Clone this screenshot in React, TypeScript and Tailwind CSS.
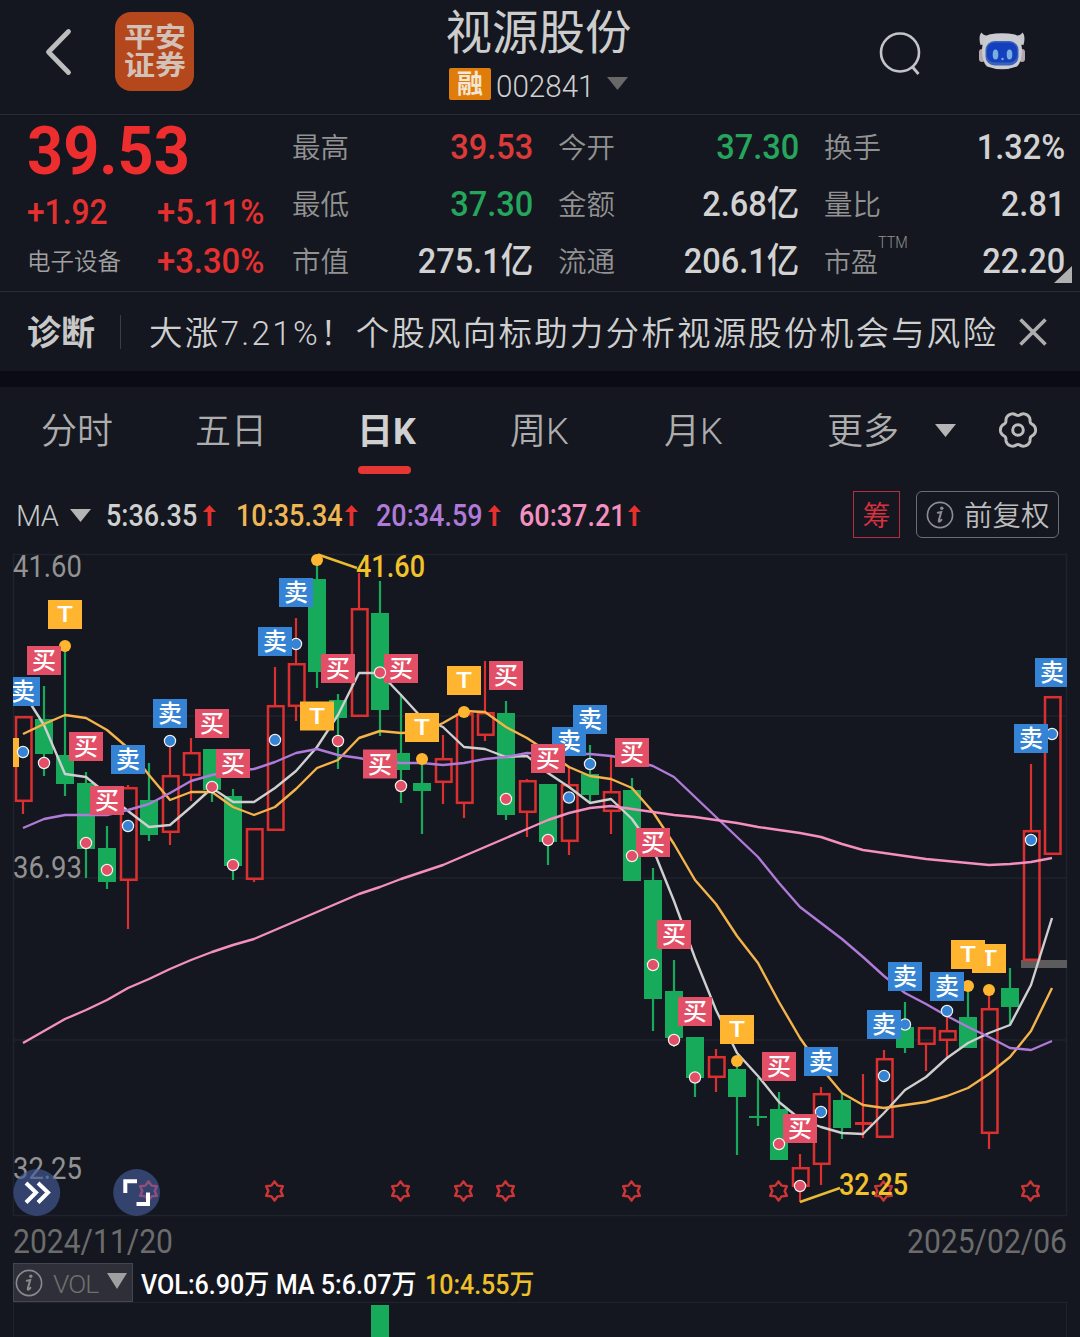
import type { ReactNode } from 'react';
import clsx from 'clsx';

type Kind = 'buy' | 'sell' | 'both';

// up/down, high, body top, body bottom, low
type Candle = ['u' | 'd', number, number, number, number];

const candles: Candle[] = [
  ['u', 716, 716, 802, 814],
  ['d', 686, 719, 754, 776],
  ['d', 642, 755, 784, 796],
  ['d', 772, 783, 849, 878],
  ['d', 826, 848, 882, 889],
  ['u', 785, 787, 881, 929],
  ['d', 763, 800, 835, 841],
  ['u', 741, 775, 833, 845],
  ['u', 738, 752, 776, 801],
  ['d', 749, 749, 790, 802],
  ['d', 789, 796, 866, 880],
  ['u', 828, 828, 880, 882],
  ['u', 667, 705, 831, 831],
  ['u', 618, 663, 707, 721],
  ['d', 560, 579, 672, 688],
  ['d', 694, 700, 718, 769],
  ['u', 573, 608, 717, 717],
  ['d', 581, 613, 710, 736],
  ['d', 695, 753, 770, 803],
  ['d', 759, 783, 791, 834],
  ['u', 735, 758, 783, 804],
  ['u', 712, 713, 804, 818],
  ['u', 661, 712, 736, 741],
  ['d', 701, 713, 815, 820],
  ['u', 779, 780, 813, 837],
  ['d', 784, 784, 842, 865],
  ['u', 767, 784, 842, 855],
  ['d', 745, 774, 795, 802],
  ['u', 755, 791, 812, 834],
  ['d', 778, 790, 881, 881],
  ['d', 868, 880, 999, 1031],
  ['d', 960, 991, 1038, 1047],
  ['d', 1037, 1037, 1078, 1097],
  ['u', 1049, 1056, 1078, 1092],
  ['d', 1061, 1069, 1097, 1155],
  ['d', 1078, 1116, 1118, 1126],
  ['d', 1092, 1109, 1160, 1160],
  ['u', 1154, 1167, 1187, 1202],
  ['u', 1087, 1093, 1165, 1185],
  ['d', 1093, 1100, 1128, 1139],
  ['u', 1074, 1122, 1125, 1138],
  ['u', 1050, 1058, 1138, 1138],
  ['d', 1002, 1027, 1048, 1053],
  ['u', 1027, 1027, 1045, 1071],
  ['u', 1011, 1030, 1041, 1058],
  ['d', 986, 1017, 1048, 1048],
  ['u', 990, 1008, 1134, 1149],
  ['d', 968, 988, 1007, 1025],
  ['u', 764, 830, 961, 961],
  ['u', 696, 696, 855, 855],
];

// candle index, kind, badge top, dot centre
const marks: [number, Kind, number, number][] = [
  [0, 'sell', 677, 752],
  [1, 'buy', 646, 763],
  [2, 'both', 600, 646],
  [3, 'buy', 732, 843],
  [4, 'buy', 786, 870],
  [5, 'sell', 745, 826],
  [7, 'sell', 699, 741],
  [9, 'buy', 709, 787],
  [10, 'buy', 749, 865],
  [12, 'sell', 627, 740],
  [13, 'sell', 578, 644],
  [14, 'both', 701.5, 560],
  [15, 'buy', 654, 741],
  [17, 'buy', 749.5, 672.5],
  [18, 'buy', 654, 786],
  [19, 'both', 713, 759],
  [21, 'both', 666, 712],
  [23, 'buy', 661, 799],
  [25, 'buy', 744, 840],
  [26, 'sell', 727, 797.5],
  [27, 'sell', 705, 764],
  [29, 'buy', 738, 856],
  [30, 'buy', 828, 965],
  [31, 'buy', 920, 1040],
  [32, 'buy', 997, 1077.5],
  [34, 'both', 1015, 1061],
  [36, 'buy', 1052, 1144],
  [37, 'buy', 1114, 1186],
  [38, 'sell', 1047, 1112],
  [41, 'sell', 1010, 1076],
  [42, 'sell', 962, 1024.5],
  [44, 'sell', 972, 1011],
  [45, 'both', 940, 986],
  [46, 'both', 944, 990],
  [48, 'sell', 724, 840],
  [49, 'sell', 658, 734],
];

const ma5 = [
  692, 725, 774, 777, 794, 811, 827, 825, 807, 788, 802, 802, 788, 771, 747, 715, 673, 673, 695, 718, 727, 747, 749,
  757, 756, 773, 787, 803, 799, 819, 849, 901, 958, 1010, 1053, 1076, 1102, 1119, 1127, 1133, 1134, 1113, 1090, 1077,
  1058, 1043, 1033, 1025, 985, 918,
];
const ma10 = [
  734, 724, 715, 718, 730, 748, 775, 800, 792, 792, 807, 815, 807, 789, 768, 760, 738, 731, 733, 732, 723, 711, 712,
  727, 738, 752, 767, 776, 779, 788, 812, 844, 880, 904, 936, 963, 1002, 1038, 1068, 1093, 1105, 1108, 1105, 1102,
  1096, 1088, 1074, 1057, 1031, 988,
];
const ma20 = [
  828, 819, 815, 815, 815, 810, 804, 793, 781, 775, 771, 769, 762, 753, 749, 755, 758, 762, 763, 763, 765, 763, 759,
  757, 753, 754, 754, 754, 756, 760, 766, 777, 797, 817, 837, 857, 883, 907, 923, 939, 957, 976, 993, 1004, 1016,
  1027, 1037, 1048, 1050, 1041,
];
const ma60 = [
  1043, 1031, 1019, 1010, 1000, 988, 979, 969, 960, 952, 945, 939, 930, 921, 912, 903, 894, 887, 879, 872, 865, 856,
  847, 838, 829, 820, 813, 808, 806, 809, 812, 815, 817, 820, 823, 827, 830, 833, 837, 844, 850, 853, 856, 859, 861,
  863, 865, 864, 862, 858,
];

const cx = (i: number) => 23 + i * 21;
const toPoints = (ys: number[]) => ys.map((y, i) => `${cx(i)},${y}`).join(' ');

const starIndexes = [12, 18, 21, 23, 29, 36, 41, 48];

const kindColor = { buy: '#e34f66', sell: '#3583d4', both: '#ffb52f' };
const kindText = { buy: '买', sell: '卖', both: 'T' };

const starPath = () => {
  const pts: string[] = [];
  for (let k = 0; k < 12; k++) {
    const r = k % 2 === 0 ? 9.6 : 6.2;
    const a = (Math.PI / 6) * k - Math.PI / 2;
    pts.push(`${(r * Math.cos(a)).toFixed(2)},${(r * Math.sin(a)).toFixed(2)}`);
  }
  return pts.join(' ');
};

const gearPath = () => {
  const pts: string[] = [];
  for (let k = 0; k < 120; k++) {
    const a = (Math.PI * 2 * k) / 120;
    const r = 16.3 + 1.5 * Math.cos(6 * a) - 0.3 * Math.cos(12 * a);
    pts.push(`${(20 + r * Math.cos(a)).toFixed(2)},${(20 + r * Math.sin(a)).toFixed(2)}`);
  }
  return pts.join(' ');
};

const Triangle = ({ className }: { className?: string }) => (
  <svg viewBox="0 0 21 13" preserveAspectRatio="none" className={clsx('shrink-0', className)}>
    <path d="M0 0H21L10.5 13Z" fill="currentColor" />
  </svg>
);

const InfoIcon = ({ className }: { className?: string }) => (
  <svg viewBox="0 0 28 28" className={clsx('h-7 w-7 shrink-0', className)}>
    <circle cx="14" cy="14" r="12.6" fill="none" stroke="currentColor" strokeWidth="1.6" />
    <circle cx="15.8" cy="7.2" r="1.7" fill="currentColor" />
    <path
      d="M11.8 11.8l3.4-.8-2.400 8.600c-.3 1.600.8 1.400 2.600-.8"
      fill="none"
      stroke="currentColor"
      strokeWidth="2"
      strokeLinecap="round"
    />
  </svg>
);

const UpArrow = () => (
  <svg viewBox="0 0 13 21" className="h-[21px] w-[13px] shrink-0">
    <path d="M6.5 0L13 7H8.4V21H4.6V7H0Z" fill="#e8302f" />
  </svg>
);

const Robot = () => (
  <svg viewBox="0 0 46 38" className="h-[38px] w-[46px]">
    <path d="M1.5 13C-.3 7 .6 2 2.6.6 4 3 6.5 4 9 3.400L8 12Z" fill="#c4c6cb" />
    <path d="M44.500 13C46.300 7 45.400 2 43.400.6 42 3 39.500 4 37 3.400L38 12Z" fill="#c4c6cb" />
    <rect x="0" y="17" width="6" height="13" rx="3" fill="#b5a6ab" />
    <rect x="40" y="17" width="6" height="13" rx="3" fill="#b5a6ab" />
    <path d="M10 2.500Q23 0 36 2.500Q42 5 43 17Q43 30 38 34.500Q23 40 8 34.500Q3 30 3 17Q4 5 10 2.500Z" fill="#c9cbd0" />
    <rect x="6.500" y="9" width="33" height="24.500" rx="9" fill="#3a62b8" />
    <rect x="7.800" y="10.500" width="30.400" height="20" rx="8" fill="#1440bd" />
    <ellipse cx="16.500" cy="22.500" rx="2.800" ry="5" fill="#79aee0" />
    <ellipse cx="30.500" cy="22.500" rx="2.800" ry="5" fill="#79aee0" />
    <circle cx="23.500" cy="27" r="1.200" fill="#79aee0" />
  </svg>
);

const Header = () => (
  <header className="flex h-[115px] border-b border-[#2a2d35]">
    <div className="flex w-[360px] pt-3">
      <svg viewBox="0 0 30 50" className="mt-[15px] ml-[43px] h-[50px] w-[30px]">
        <path d="M25.500 4.500L5.500 25L25.500 45.500" fill="none" stroke="#bdbdbd" strokeWidth="4.800" strokeLinecap="round" strokeLinejoin="round" />
      </svg>
      <div className="ml-[42px] flex h-[79px] w-[79px] flex-col items-center justify-center rounded-2xl bg-[#b5471c] pt-px text-[27px] leading-[28px] font-bold text-[#d3c0b6]">
        <span className="scale-x-[1.15]">平安</span>
        <span className="scale-x-[1.15]">证券</span>
      </div>
    </div>
    <div className="flex w-[360px] flex-col items-center">
      <h1 className="mt-[10px] mr-[3px] text-[46.500px] leading-[46px] text-[#cdcdcd]">视源股份</h1>
      <div className="mt-[13px] flex w-[182px] items-center">
        <span className="-mt-1 flex h-8 w-[42px] shrink-0 items-center justify-center rounded-xs bg-[#e07c0a] text-[26px] leading-none font-bold text-[#f3e6d4]">
          融
        </span>
        <span className="ml-[5px] w-[111px] origin-left scale-x-[.94] pt-[2px] text-[31.500px] leading-none font-[350] text-[#d0d0d0]">002841</span>
        <Triangle className="-mt-1 h-[13px] w-[21px] text-[#686868]" />
      </div>
    </div>
    <div className="flex w-[360px] pt-8">
      <svg viewBox="0 0 44 46" className="ml-[158px] h-[46px] w-[44px]">
        <circle cx="22" cy="20.500" r="19" fill="none" stroke="#c2c4c8" strokeWidth="2.600" />
        <path d="M34.500 35L40.500 42" stroke="#c2c4c8" strokeWidth="2.800" />
      </svg>
      <div className="ml-[57px]">
        <Robot />
      </div>
    </div>
  </header>
);

const Stat = ({ label, value, tone = 'text-[#d2d2d2]' }: { label: ReactNode; value: string; tone?: string }) => (
  <div className="flex h-[57px] items-center justify-between">
    <span className="pt-[5px] text-[28.500px] leading-none font-[350] text-[#929292]">{label}</span>
    <span className={clsx('-mr-px origin-right scale-x-[.93] pt-[2px] text-[35px] leading-none font-medium', tone)}>{value}</span>
  </div>
);

const Quote = () => (
  <section className="flex h-[177px] border-b border-[#2a2d35]">
    <div className="w-[292px] pl-[27px] text-[#e43030]">
      <div className="w-[170px] origin-left scale-x-[.94] pt-[3px] text-[67px] leading-[66px] font-bold text-[#ee2e2e]">39.53</div>
      <div className="flex h-[57px] items-center text-[34.500px] leading-none font-medium">
        <span className="w-[130px] origin-left scale-x-[.92]">+1.92</span>
        <span className="origin-left scale-x-[.95]">+5.11%</span>
      </div>
      <div className="-mt-[3px] flex h-[46px] items-center text-[34.500px] leading-none font-medium">
        <span className="w-[130px] pt-1 text-[23.500px] font-[350] text-[#a0a0a0]">电子设备</span>
        <span className="origin-left scale-x-[.95]">+3.30%</span>
      </div>
    </div>
    <div className="w-[240px] pt-[3px]">
      <Stat label="最高" value="39.53" tone="text-[#dc3a38]" />
      <Stat label="最低" value="37.30" tone="text-[#25a65c]" />
      <Stat label="市值" value="275.1亿" />
    </div>
    <div className="ml-[26px] w-[240px] pt-[3px]">
      <Stat label="今开" value="37.30" tone="text-[#25a65c]" />
      <Stat label="金额" value="2.68亿" />
      <Stat label="流通" value="206.1亿" />
    </div>
    <div className="relative ml-[26px] w-[240px] pt-[3px]">
      <Stat label="换手" value="1.32%" />
      <Stat label="量比" value="2.81" />
      <Stat
        label={
          <span className="flex text-[27px]">
            市盈<span className="-mt-[15px] origin-left scale-x-90 text-base leading-none">TTM</span>
          </span>
        }
        value="22.20"
      />
      <svg viewBox="0 0 18 17" className="absolute -right-2 bottom-2 h-[17px] w-[18px]">
        <path d="M18 0V17H0Z" fill="#b0b0b0" />
      </svg>
    </div>
  </section>
);

const Diagnosis = () => (
  <section className="flex h-[79px] items-center pl-[27px]">
    <span className="pt-[3px] text-[34px] leading-none font-bold text-[#c8c8c8]">诊断</span>
    <span className="ml-[25px] h-[34px] w-px bg-[#3a3d45]" />
    <span className="ml-7 w-[870px] pt-1 text-[33.500px] leading-none font-[350] tracking-[2.200px] whitespace-nowrap text-[#cfcfcf]">
      大涨7.21%！个股风向标助力分析视源股份机会与风险
    </span>
    <svg viewBox="0 0 28 28" className="h-7 w-7 shrink-0">
      <path d="M1.500 1.500L26.500 26.500M26.500 1.500L1.500 26.500" stroke="#adadad" strokeWidth="3.600" />
    </svg>
  </section>
);

const Tabs = () => (
  <nav className="flex h-[104px] pt-[27px] text-[36px] leading-[36px] font-[350] whitespace-nowrap text-[#adadad]">
    <span className="ml-[41px] w-[154px]">分时</span>
    <span className="w-[162px]">五日</span>
    <span className="w-[153px] font-bold text-[#d0d0d0]">
      日K
      <span className="mt-4 ml-px block h-2 w-[53px] rounded-full bg-[#e63634]" />
    </span>
    <span className="w-[154px]">周K</span>
    <span className="w-[163px]">月K</span>
    <span className="w-[108px]">更多</span>
    <Triangle className="mt-[10px] h-[13px] w-[21px] text-[#b5b5b5]" />
    <svg viewBox="0 0 40 40" className="-mt-1 ml-[42px] h-10 w-10">
      <polygon points={gearPath()} fill="none" stroke="#bcbcbc" strokeWidth="3" />
      <circle cx="20" cy="20" r="5.300" fill="none" stroke="#bcbcbc" strokeWidth="3" />
    </svg>
  </nav>
);

const MaValue = ({ text, width, color }: { text: string; width: string; color: string }) => (
  <span className={clsx('flex items-center', width)}>
    <span className={clsx('origin-left scale-x-[.87] text-[31px] leading-none font-medium', color)}>{text}</span>
  </span>
);

const MaRow = () => (
  <section className="flex h-[54px] items-start pl-4">
    <div className="flex h-12 items-center">
      <span className="w-[54px] pt-[3px] text-[29px] leading-none font-[350] tracking-[-0.500px] text-[#c8c8c8]">MA</span>
      <Triangle className="h-[13px] w-[21px] text-[#b5b5b5]" />
      <div className="ml-[15px] flex items-center">
        <MaValue text="5:36.35" width="w-[97px]" color="text-[#d0d0d0]" />
        <UpArrow />
      </div>
      <div className="ml-[20px] flex items-center">
        <MaValue text="10:35.34" width="w-[109px]" color="text-[#f0b654]" />
        <UpArrow />
      </div>
      <div className="ml-[18px] flex items-center">
        <MaValue text="20:34.59" width="w-[112px]" color="text-[#b07ad8]" />
        <UpArrow />
      </div>
      <div className="ml-[18px] flex items-center">
        <MaValue text="60:37.21" width="w-[109px]" color="text-[#f590c0]" />
        <UpArrow />
      </div>
    </div>
    <span className="ml-auto flex h-[47px] w-[47px] items-center justify-center border border-[#b32f40] pt-1 text-[28px] leading-none font-[350] text-[#d8303f]">
      筹
    </span>
    <span className="mr-[21px] ml-4 flex h-[47px] w-[143px] items-center rounded-md border border-[#6b6d72] pl-[9px] text-[28.500px] leading-none font-[350] text-[#bcbcbc]">
      <InfoIcon className="mr-[10px] text-[#8b8d92]" />
      <span className="pt-[5px]">前复权</span>
    </span>
  </section>
);

const KLine = () => (
  <svg viewBox="0 545 1080 673" className="block h-[673px] w-[1080px]">
    <clipPath id="plot">
      <rect x="13" y="545" width="1054" height="673" />
    </clipPath>

    {/* grid */}
    <g stroke="#20232d" strokeWidth="1.500" fill="none">
      <rect x="13.500" y="554.500" width="1053" height="661" />
      <path d="M13 716H1067M13 878H1067M13 1040H1067" />
    </g>
    <rect x="1021" y="960" width="46" height="8" fill="#5c5c5c" />

    {/* candles */}
    {candles.map(([dir, high, top, bottom, low], i) => {
      const x = cx(i);
      if (dir === 'd') {
        return (
          <g key={i} fill="#17aa5b">
            <rect x={x - 1.1} y={high} width="2.200" height={low - high} />
            <rect x={x - 9} y={top} width="18" height={bottom - top} />
          </g>
        );
      }
      return (
        <g key={i} fill="#dc3030">
          <rect x={x - 1.1} y={high} width="2.200" height={top - high} />
          <rect x={x - 1.1} y={bottom} width="2.200" height={low - bottom} />
          {bottom - top < 5 ? (
            <rect x={x - 8} y={top} width="17" height={bottom - top} />
          ) : (
            <rect x={x - 7} y={top + 1.2} width="15.500" height={bottom - top - 2.4} fill="none" stroke="#dc3030" strokeWidth="2.500" />
          )}
        </g>
      );
    })}

    {/* moving averages */}
    <g fill="none" strokeWidth="2.400" strokeLinejoin="round">
      <polyline points={toPoints(ma5)} stroke="#cfcfcf" />
      <polyline points={toPoints(ma10)} stroke="#f5b34c" />
      <polyline points={toPoints(ma20)} stroke="#b07ad8" />
      <polyline points={toPoints(ma60)} stroke="#f58fc0" />
    </g>

    {/* event stars */}
    {starIndexes.map((i) => (
      <polygon key={i} points={starPath()} transform={`translate(${cx(i) - 0.5} 1191)`} fill="none" stroke="#cc3535" strokeWidth="2.500" strokeLinejoin="round" />
    ))}

    {/* axis and extreme labels */}
    <g fontSize="31" fill="#929292">
      <text x="13" y="577" textLength="69" lengthAdjust="spacingAndGlyphs">41.60</text>
      <text x="13" y="878" textLength="69" lengthAdjust="spacingAndGlyphs">36.93</text>
      <text x="13" y="1179" textLength="69" lengthAdjust="spacingAndGlyphs">32.25</text>
    </g>
    <g fontSize="31" fontWeight="500" fill="#f2c22b">
      <path d="M318 554.500L357 568M800 1202L840 1188" stroke="#e8bb35" strokeWidth="2.400" />
      <text x="356" y="577" textLength="69" lengthAdjust="spacingAndGlyphs">41.60</text>
      <text x="839" y="1195" textLength="69" lengthAdjust="spacingAndGlyphs">32.25</text>
    </g>

    {/* trade marks, later ones go underneath */}
    <g clipPath="url(#plot)">
      <rect x="13" y="738" width="6" height="29" fill={kindColor.both} />
      {[...marks].reverse().map(([i, kind, badgeY, dotY]) => {
        const x = cx(i);
        return (
          <g key={i}>
            <circle cx={x} cy={dotY} r={kind === 'both' ? 6 : 5.6} fill={kindColor[kind]} stroke={kind === 'both' ? 'none' : '#f0f0f0'} strokeWidth="1.200" />
            <rect x={x - 17} y={badgeY} width="34" height="29" fill={kindColor[kind]} />
            {kind === 'both' ? (
              <text x={x - 8} y={badgeY + 22} fontSize="22" fontWeight="500" textLength="16" lengthAdjust="spacingAndGlyphs" fill="#fff">
                {kindText[kind]}
              </text>
            ) : (
              <text x={x} y={badgeY + 23} textAnchor="middle" fontSize="24" fontWeight="500" fill="#fff">
                {kindText[kind]}
              </text>
            )}
          </g>
        );
      })}
    </g>

    {/* floating controls */}
    <g fill="#445b9a" fillOpacity=".65">
      <circle cx="36.800" cy="1192.500" r="23.400" />
      <circle cx="136.600" cy="1192.500" r="23.400" />
    </g>
    <polygon points={starPath()} transform="translate(148.500 1191)" fill="none" stroke="#8f4f7c" strokeWidth="2.500" strokeLinejoin="round" />
    <g fill="none" stroke="#fff" strokeWidth="4">
      <path d="M26 1183L36 1192.500L26 1202.500M38 1183L48 1192.500L38 1202.500" />
      <path d="M125.300 1193V1181.300H137M136.500 1204H148V1192.500" />
    </g>
  </svg>
);

const Dates = () => (
  <div className="flex h-[45px] items-center justify-between px-[13px] pt-1 text-[32.500px] leading-none text-[#6c6c6c]">
    <span className="w-[160px] origin-left scale-x-[.925]">2024/11/20</span>
    <span className="flex w-[160px] origin-right scale-x-[.925] justify-end">2025/02/06</span>
  </div>
);

const Volume = () => (
  <section>
    <div className="flex h-[39px] items-center pl-[13px] text-[27px] leading-none font-medium text-white">
      <div className="flex h-[39px] w-[120px] items-center border border-[#44454f] bg-[#2e2f39] pl-px text-[#707070]">
        <InfoIcon className="text-[#8a8a8a]" />
        <span className="ml-[10px] w-[54px] pt-[3px] text-[26.500px] font-[350] tracking-[-1px]">VOL</span>
        <Triangle className="-mt-1 h-4 w-5 text-[#a0a0a0]" />
      </div>
      <span className="ml-2 w-[284px] origin-left scale-x-[.93] pt-[5px] whitespace-nowrap">VOL:6.90万 MA 5:6.07万</span>
      <span className="origin-left scale-x-[.925] pt-[5px] text-[#efc02a]">10:4.55万</span>
    </div>
    <div className="mx-[13px] h-[35px] border-x border-t border-[#20232d] pt-[2px] pl-[357px]">
      <div className="h-8 w-[18px] bg-[#17aa5b]" />
    </div>
  </section>
);

const App = () => (
  <div className="h-[1337px] w-[1080px] overflow-hidden bg-[#14171f] font-[Roboto,'Noto_Sans_CJK_SC',sans-serif]">
    <Header />
    <Quote />
    <Diagnosis />
    <div className="h-4 bg-[#0a0b14]" />
    <Tabs />
    <MaRow />
    <KLine />
    <Dates />
    <Volume />
  </div>
);

export default App;
